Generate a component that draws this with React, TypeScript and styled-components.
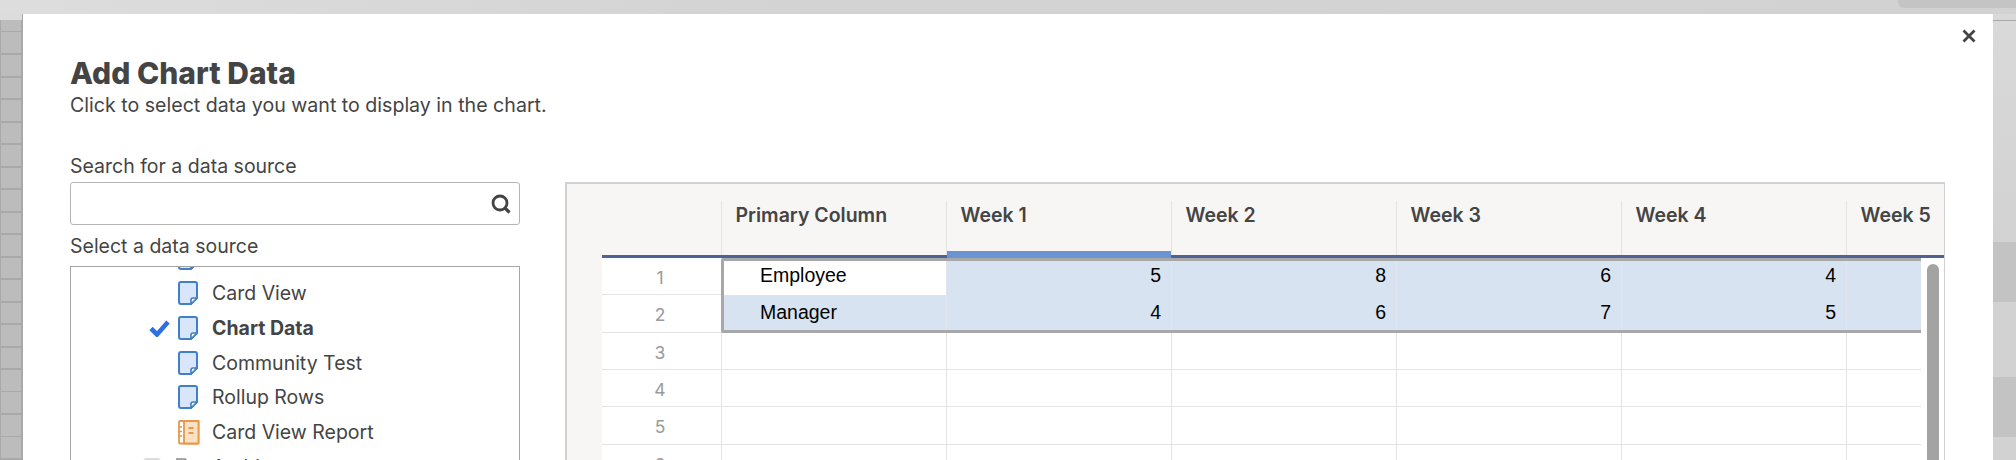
import styled, { createGlobalStyle } from "styled-components";

const GlobalStyle = createGlobalStyle`
  html, body {
    margin: 0;
    padding: 0;
    background: #d2d2d2;
    overflow: hidden;
  }
  * {
    box-sizing: border-box;
  }
`;

const weeks = ["Week 1", "Week 2", "Week 3", "Week 4", "Week 5"];

const dataRows = [
  { name: "Employee", values: [5, 8, 6, 4, null] },
  { name: "Manager", values: [4, 6, 7, 5, null] },
];

const DocIcon = () => (
  <svg width="21" height="26" viewBox="0 0 21 26" fill="none">
    <path d="M3 2h14a2 2 0 0 1 2 2v14l-6 6H3a2 2 0 0 1-2-2V4a2 2 0 0 1 2-2z" fill="#d9e5f8" stroke="#3f80c8" strokeWidth="2" />
    <path d="M13 24v-4a2 2 0 0 1 2-2h4z" fill="#fff" stroke="#3f80c8" strokeWidth="1.6" strokeLinejoin="round" />
  </svg>
);

const ReportIcon = () => (
  <svg width="22" height="25" viewBox="0 0 22 25" fill="none">
    <rect x="1" y="1" width="19.5" height="22.5" rx="1" fill="#fff" stroke="#e8984c" strokeWidth="1.8" />
    <path d="M6 1h14.5v22.5H6z" fill="#fce0c2" stroke="#e8984c" strokeWidth="1.8" />
    <path d="M0 7h4M0 11.5h4M0 16h4" stroke="#e8984c" strokeWidth="1.6" />
    <path d="M10.5 8h5M10.5 13h5" stroke="#e8984c" strokeWidth="1.8" />
  </svg>
);

const FolderIcon = () => (
  <svg width="25" height="22" viewBox="0 0 25 22" fill="none">
    <path d="M1 20V3h8l3 3h12v14z" fill="#fff" stroke="#8a8a8a" strokeWidth="1.6" />
  </svg>
);

const CheckIcon = () => (
  <svg width="21" height="18" viewBox="0 0 21 18" fill="none">
    <path d="M2 9.5l6 6L19 3" stroke="#2f6fe4" strokeWidth="4.6" />
  </svg>
);

const SearchIcon = () => (
  <svg width="22" height="22" viewBox="0 0 22 22" fill="none">
    <circle cx="10" cy="10" r="7" stroke="#444" strokeWidth="2.8" />
    <path d="M14.5 14.5l5 5" stroke="#444" strokeWidth="3.2" />
  </svg>
);

const CloseIcon = () => (
  <svg width="14" height="14" viewBox="0 0 14 14" fill="none">
    <path d="M1.5 1.5l11 11M12.5 1.5l-11 11" stroke="#444" strokeWidth="2.8" />
  </svg>
);

const App = () => {
  return (
    <>
      <GlobalStyle />
      <Page>
        <TopStrip>
          <TopPill />
        </TopStrip>

        <Stage>
          <LeftStrip>
            <SheetGrid />
          </LeftStrip>

          <Modal>
            <CloseButton>
              <CloseIcon />
            </CloseButton>

            <Title>Add Chart Data</Title>
            <Subtitle>Click to select data you want to display in the chart.</Subtitle>

            <Columns>
              <SourceColumn>
                <FieldLabel>Search for a data source</FieldLabel>
                <SearchBox>
                  <SearchIcon />
                </SearchBox>

                <SelectLabel>Select a data source</SelectLabel>
                <Tree>
                  <TreeInner>
                    <TreeRow>
                      <CheckSlot />
                      <IconSlot><DocIcon /></IconSlot>
                    </TreeRow>
                    <TreeRow>
                      <CheckSlot />
                      <IconSlot><DocIcon /></IconSlot>
                      <TreeText>Card View</TreeText>
                    </TreeRow>
                    <TreeRow>
                      <CheckSlot><CheckIcon /></CheckSlot>
                      <IconSlot><DocIcon /></IconSlot>
                      <TreeText selected>Chart Data</TreeText>
                    </TreeRow>
                    <TreeRow>
                      <CheckSlot />
                      <IconSlot><DocIcon /></IconSlot>
                      <TreeText>Community Test</TreeText>
                    </TreeRow>
                    <TreeRow>
                      <CheckSlot />
                      <IconSlot><DocIcon /></IconSlot>
                      <TreeText>Rollup Rows</TreeText>
                    </TreeRow>
                    <TreeRow>
                      <CheckSlot />
                      <IconSlot><ReportIcon /></IconSlot>
                      <TreeText>Card View Report</TreeText>
                    </TreeRow>
                    <FolderRow>
                      <FolderToggle />
                      <FolderSlot><FolderIcon /></FolderSlot>
                      <TreeText>Archive</TreeText>
                    </FolderRow>
                  </TreeInner>
                </Tree>
              </SourceColumn>

              <PreviewPanel>
                <HeaderRow>
                  <HeaderSpacer />
                  <HeaderCell>Primary Column</HeaderCell>
                  {weeks.map((week, index) => (
                    <HeaderCell key={week} active={index === 0}>{week}</HeaderCell>
                  ))}
                </HeaderRow>

                <GridBody>
                  <RowsArea>
                    <Selection />
                    {dataRows.map((row, index) => (
                      <Row key={row.name}>
                        <RowNumber>{index + 1}</RowNumber>
                        <PrimaryCell selected={index > 0}>{row.name}</PrimaryCell>
                        {row.values.map((value, i) => (
                          <NumberCell key={i}>{value}</NumberCell>
                        ))}
                      </Row>
                    ))}
                    {[3, 4, 5, 6].map((n) => (
                      <Row key={n}>
                        <RowNumber>{n}</RowNumber>
                        <EmptyCell />
                        {weeks.map((week) => (
                          <EmptyCell key={week} />
                        ))}
                      </Row>
                    ))}
                  </RowsArea>
                  <ScrollTrack>
                    <ScrollThumb />
                  </ScrollTrack>
                </GridBody>
              </PreviewPanel>
            </Columns>
          </Modal>

          <RightStrip>
            <RightBand />
            <RightBand dark />
            <RightBand />
            <RightBand dark />
            <RightBand />
          </RightStrip>
        </Stage>
      </Page>
    </>
  );
};

const Page = styled.div`
  width: 2016px;
  height: 460px;
  display: flex;
  flex-direction: column;
  overflow: hidden;
  font-family: "Inter", "Liberation Sans", sans-serif;
  color: #444;
`;

const TopStrip = styled.div`
  height: 14px;
  flex: none;
  display: flex;
  justify-content: flex-end;
  background: linear-gradient(90deg, #dddddd 0%, #d3d3d3 40%, #d2d2d2 100%);
`;

const TopPill = styled.div`
  width: 118px;
  height: 8px;
  background: #c4c4c4;
  border-bottom-left-radius: 6px;
`;

const Stage = styled.div`
  flex: 1;
  display: flex;
  min-height: 0;
`;

const LeftStrip = styled.div`
  width: 23px;
  flex: none;
  padding-top: 6px;
  background: #dcdcdc;
  border-right: 1px solid #a9a9a9;
`;

const SheetGrid = styled.div`
  height: 100%;
  background-color: #bcbcbc;
  background-image:
    repeating-linear-gradient(180deg, #a9a9a9 0 1.5px, transparent 1.5px 22.5px),
    linear-gradient(90deg, #a9a9a9 0 1px, transparent 1px 21px, #a9a9a9 21px);
  background-position: 0 11px, 0 0;
`;

const RightStrip = styled.div`
  width: 23px;
  flex: none;
  display: flex;
  flex-direction: column;
  padding-top: 6px;
  background: #d9d9d9;
  border-top: 0;
`;

const RightBand = styled.div<{ dark?: boolean }>`
  flex: none;
  height: ${(props) => (props.dark ? "60px" : "75px")};
  background: ${(props) => (props.dark ? "#c3c3c3" : "#d2d2d2")};

  &:first-child {
    height: 222px;
    border-top: 1px solid #a8a8a8;
    background: linear-gradient(180deg, #d9d9d9 0%, #d2d2d2 100%);
  }
`;

const Modal = styled.div`
  position: relative;
  flex: 1;
  min-width: 0;
  background: #fff;
  padding: 44px 48px 0 47px;
  overflow: hidden;
`;

const CloseButton = styled.div`
  position: absolute;
  top: 15px;
  right: 17px;
  display: flex;
`;

const Title = styled.h1`
  margin: 0;
  font-family: "Inter", sans-serif;
  font-size: 30px;
  line-height: 30px;
  font-weight: 800;
  color: #444;
`;

const Subtitle = styled.p`
  margin: 5px 0 0;
  font-size: 19.6px;
  line-height: 24px;
  color: #444;
`;

const Columns = styled.div`
  display: flex;
  gap: 45px;
  margin-top: 37px;
`;

const SourceColumn = styled.div`
  width: 450px;
  flex: none;
`;

const FieldLabel = styled.div`
  font-size: 19.5px;
  line-height: 24px;
  height: 28px;
  color: #444;
`;

const SelectLabel = styled(FieldLabel)`
  margin-top: 9px;
  height: 32px;
`;

const SearchBox = styled.div`
  height: 43px;
  border: 1px solid #b5b5b5;
  border-radius: 3px;
  display: flex;
  align-items: center;
  justify-content: flex-end;
  padding-right: 7px;
`;

const Tree = styled.div`
  height: 300px;
  border: 1.5px solid #a5a5a5;
  overflow: hidden;
`;

const TreeInner = styled.div`
  margin-top: -26px;
`;

const TreeRow = styled.div`
  height: 34.75px;
  display: flex;
  align-items: center;
  padding-left: 78px;
`;

const FolderRow = styled(TreeRow)`
  padding-left: 72px;
`;

const CheckSlot = styled.div`
  width: 28.5px;
  height: 100%;
  display: flex;
  align-items: center;
`;

const IconSlot = styled.div`
  width: 34.5px;
  display: flex;
  align-items: center;
`;

const FolderToggle = styled.div`
  width: 18px;
  height: 18px;
  margin-right: 15px;
  border-radius: 4px;
  background: #dcdcdc;
`;

const FolderSlot = styled.div`
  width: 36px;
  display: flex;
  align-items: center;
`;

const TreeText = styled.span<{ selected?: boolean }>`
  font-size: 19.5px;
  line-height: 24px;
  font-weight: ${(props) => (props.selected ? 700 : 400)};
  color: #444;
  white-space: nowrap;
`;

const PreviewPanel = styled.div`
  flex: 1;
  min-width: 0;
  height: 300px;
  margin-top: 28px;
  border: 2px solid #d2d2d2;
  border-bottom: 0;
  border-right-width: 1px;
  background: #f7f6f4;
  padding: 17px 0 0 35px;
  overflow: hidden;
`;

const HeaderRow = styled.div`
  display: flex;
  height: 57px;
  border-bottom: 3px solid #4f6296;
`;

const HeaderSpacer = styled.div`
  width: 119px;
  flex: none;
`;

const HeaderCell = styled.div<{ active?: boolean }>`
  position: relative;
  width: 225px;
  flex: none;
  padding: 4px 0 0 13.5px;
  border-left: 1px solid #e3e3e3;
  font-size: 19.5px;
  line-height: 20px;
  font-weight: 600;
  color: #444;
  white-space: nowrap;

  ${(props) =>
    props.active &&
    `
    &::after {
      content: "";
      position: absolute;
      left: 0;
      right: 0;
      bottom: -3px;
      height: 7px;
      background: #6a94d2;
    }
  `}
`;

const GridBody = styled.div`
  display: flex;
  background: #fff;
  height: 240px;
`;

const RowsArea = styled.div`
  position: relative;
  width: 1319px;
  flex: none;
  overflow: hidden;
`;

const Selection = styled.div`
  position: absolute;
  z-index: 2;
  top: 0;
  left: 119px;
  width: 1210px;
  height: 75px;
  border: 3px solid #a8a8a8;
  border-radius: 2px;
  pointer-events: none;
`;

const Row = styled.div`
  display: flex;
  height: 37.33px;
  border-bottom: 1px solid #e3e3e3;
`;

const RowNumber = styled.div`
  width: 119px;
  flex: none;
  padding: 3px 3px 0 0;
  display: flex;
  align-items: center;
  justify-content: center;
  font-size: 17.5px;
  color: #9a9a9a;
`;

const EmptyCell = styled.div`
  width: 225px;
  flex: none;
  border-left: 1px solid #e3e3e3;
`;

const PrimaryCell = styled.div<{ selected?: boolean }>`
  width: 225px;
  flex: none;
  display: flex;
  align-items: center;
  padding: 0 0 3px 39px;
  margin-bottom: -1px;
  background: ${(props) => (props.selected ? "#d8e3f1" : "#fff")};
  font-family: "Liberation Sans", Arial, sans-serif;
  font-size: 19.5px;
  color: #000;
`;

const NumberCell = styled.div`
  width: 225px;
  flex: none;
  display: flex;
  align-items: center;
  justify-content: flex-end;
  padding: 0 10px 3px 0;
  margin-bottom: -1px;
  background: #d8e3f1;
  border-left: 1px solid #e1e6ee;
  font-family: "Liberation Sans", Arial, sans-serif;
  font-size: 19.5px;
  color: #000;
`;

const ScrollTrack = styled.div`
  width: 24px;
  flex: none;
  padding: 6px 6px 0;
`;

const ScrollThumb = styled.div`
  height: 300px;
  background: #a3a3a3;
  border-radius: 6px;
`;

export default App;
